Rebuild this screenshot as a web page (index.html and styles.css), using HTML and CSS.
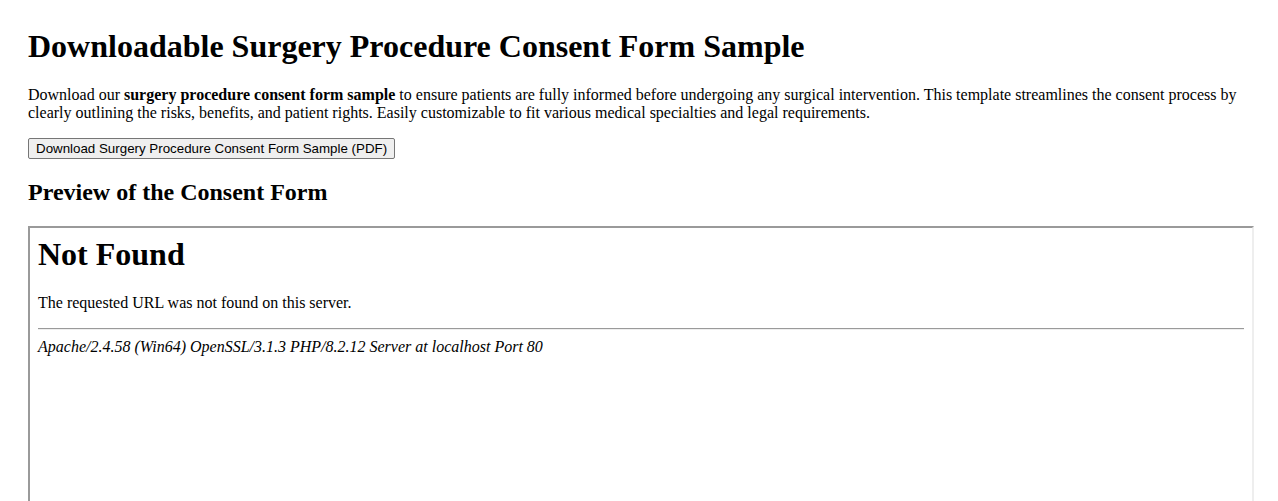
FILE: index.html
```html
<!DOCTYPE html>
<html lang="en">
<head>
<meta charset="utf-8">
<title>Downloadable Surgery Procedure Consent Form Sample</title>
<link rel="stylesheet" href="styles.css">
</head>
<body>
<main class="page">
  <h1 class="title">Downloadable Surgery Procedure Consent Form Sample</h1>
  <p class="intro">Download our <strong>surgery procedure consent form sample</strong> to ensure patients are fully informed before undergoing any surgical intervention. This template streamlines the consent process by clearly outlining the risks, benefits, and patient rights. Easily customizable to fit various medical specialties and legal requirements.</p>
  <button class="download-btn" type="button">Download Surgery Procedure Consent Form Sample (PDF)</button>
  <h2 class="subtitle">Preview of the Consent Form</h2>
  <div class="preview">
    <div class="preview-body">
      <h1 class="nf-title">Not Found</h1>
      <p class="nf-text">The requested URL was not found on this server.</p>
      <hr class="nf-rule">
      <address class="nf-address">Apache/2.4.58 (Win64) OpenSSL/3.1.3 PHP/8.2.12 Server at localhost Port 80</address>
    </div>
  </div>
</main>
</body>
</html>
```

FILE: styles.css
```css
html, body {
  margin: 0;
  padding: 0;
  background: #ffffff;
}

body {
  font-family: "Liberation Serif", "Times New Roman", serif;
  font-size: 16px;
  color: #000000;
  overflow: hidden;
}

.page {
  padding: 28px 24px 0 28px;
}

.title {
  font-size: 32px;
  font-weight: bold;
  margin: 0 0 21px 0;
}

.intro {
  margin: 0 4px 16px 0;
  line-height: 18px;
}

.download-btn {
  display: block;
  font-family: "Liberation Sans", Arial, sans-serif;
  font-size: 13.33px;
  color: #000;
  background: #efefef;
  border: 1px solid #767676;
  border-radius: 2px;
  padding: 1px 7px;
  height: 21px;
  margin: 0;
}

.subtitle {
  font-size: 24px;
  font-weight: bold;
  margin: 20px 0 20px 0;
}

.preview {
  height: 600px;
  border-style: solid;
  border-width: 2px;
  border-color: #9a9a9a #eeeeee #eeeeee #9a9a9a;
}

.preview-body {
  padding: 8px 8px 8px 8px;
}

.nf-title {
  font-size: 32px;
  font-weight: bold;
  margin: 0 0 21px 0;
}

.nf-text {
  margin: 0 0 16px 0;
}

.nf-rule {
  margin: 0 0 8px 0;
  border: none;
  border-top: 1px solid #9a9a9a;
  border-bottom: 1px solid #eeeeee;
  height: 0;
}

.nf-address {
  font-style: italic;
}
```
